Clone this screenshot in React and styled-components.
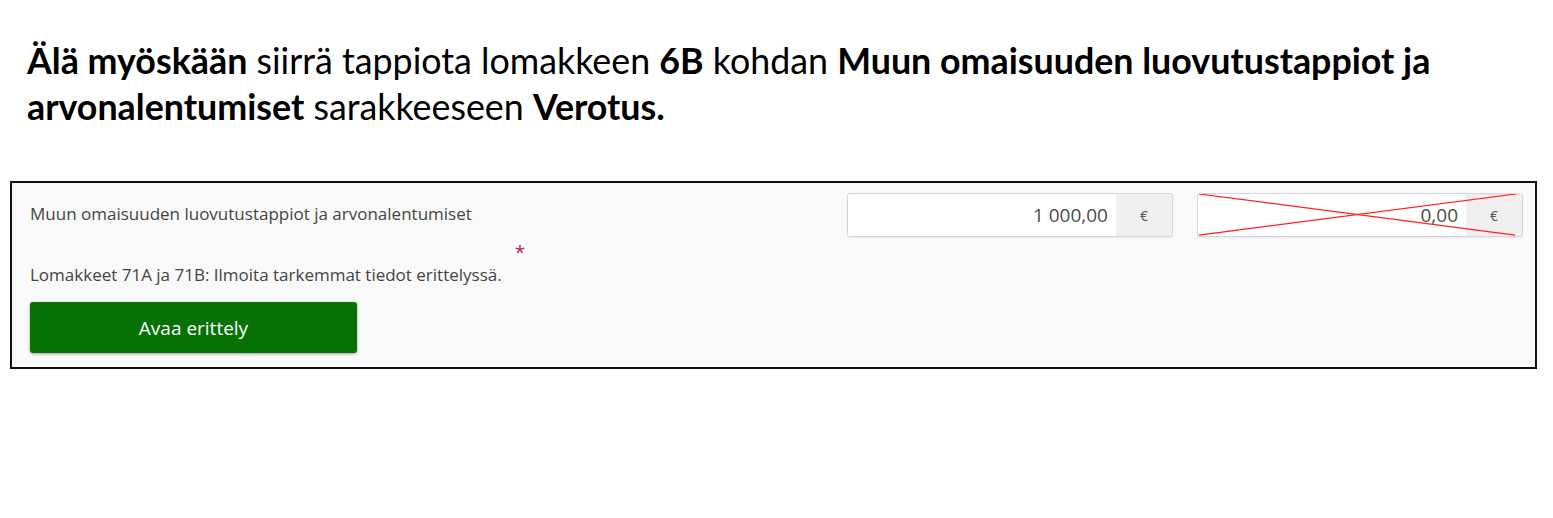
import React from "react";
import styled, { createGlobalStyle } from "styled-components";

const Global = createGlobalStyle`
  html, body { margin: 0; padding: 0; background: #ffffff; }
  body { width: 1553px; height: 518px; overflow: hidden; }
`;

const Page = styled.div`
  padding: 38px 0 0 10px;
  width: 1553px;
  box-sizing: border-box;
`;

const Heading = styled.p`
  margin: 0 0 51px 17px;
  max-width: 1480px;
  font-family: Lato, "Open Sans", sans-serif;
  font-size: 35.8px;
  line-height: 46px;
  color: #000;
  b { font-weight: 700; }
`;

const Panel = styled.section`
  width: 1527px;
  box-sizing: border-box;
  border: 2px solid #111;
  background: #f9f9f9;
  padding: 10px 12px 14px 18px;
  display: grid;
  grid-template-columns: 1fr auto;
  font-family: "Open Sans", "Noto Sans", sans-serif;
  color: #444;
`;

const LeftCol = styled.div`
  display: flex;
  flex-direction: column;
`;

const Label = styled.div`
  height: 44px;
  box-sizing: border-box;
  padding-bottom: 4px;
  display: flex;
  align-items: center;
  font-size: 17px;
`;

const HelpRow = styled.div`
  display: flex;
  align-items: flex-start;
  gap: 13px;
  margin-top: 6px;
`;

const Help = styled.div`
  font-size: 17px;
  padding-top: 22px;
  line-height: 20px;
`;

const Star = styled.span`
  color: #c2185b;
  font-size: 19px;
  line-height: 18px;
`;

const Button = styled.button`
  margin-top: 17px;
  width: 327px;
  height: 51px;
  border: none;
  border-radius: 3px;
  background: #067206;
  color: #fff;
  font-family: "Open Sans", "Noto Sans", sans-serif;
  font-size: 19px;
  box-shadow: 0 1px 3px rgba(0, 0, 0, 0.35);
  cursor: pointer;
`;

const Inputs = styled.div`
  display: flex;
  gap: 24px;
  align-items: flex-start;
`;

const Field = styled.div`
  position: relative;
  width: 326px;
  height: 44px;
  box-sizing: border-box;
  border: 1px solid #d6d6d6;
  border-radius: 3px;
  background: #fff;
  display: flex;
  overflow: hidden;
  box-shadow: 0 1px 2px rgba(0, 0, 0, 0.06);
`;

const Value = styled.div`
  flex: 1;
  display: flex;
  align-items: center;
  justify-content: flex-end;
  padding-right: 8px;
  font-size: 19px;
  color: #4a4a4a;
`;

const Addon = styled.div`
  width: 56px;
  background: #efefef;
  display: flex;
  align-items: center;
  justify-content: center;
  font-size: 14px;
  color: #555;
`;

const Cross = styled.svg`
  position: absolute;
  inset: 0;
  width: 100%;
  height: 100%;
  pointer-events: none;
`;

export default function App() {
  return (
    <>
      <Global />
      <Page>
        <Heading>
          <b>Älä myöskään</b> siirrä tappiota lomakkeen <b>6B</b> kohdan{" "}
          <b>Muun omaisuuden luovutustappiot ja arvonalentumiset</b> sarakkeeseen{" "}
          <b>Verotus.</b>
        </Heading>
        <Panel>
          <LeftCol>
            <Label>Muun omaisuuden luovutustappiot ja arvonalentumiset</Label>
            <HelpRow>
              <Help>Lomakkeet 71A ja 71B: Ilmoita tarkemmat tiedot erittelyssä.</Help>
              <Star>*</Star>
            </HelpRow>
            <div>
              <Button>Avaa erittely</Button>
            </div>
          </LeftCol>
          <Inputs>
            <Field>
              <Value>1 000,00</Value>
              <Addon>€</Addon>
            </Field>
            <Field>
              <Value>0,00</Value>
              <Addon>€</Addon>
              <Cross viewBox="0 0 326 44" preserveAspectRatio="none">
                <line x1="1" y1="0" x2="319" y2="43" stroke="#ff2020" strokeWidth="1.3" />
                <line x1="1" y1="43" x2="320" y2="0" stroke="#ff2020" strokeWidth="1.3" />
              </Cross>
            </Field>
          </Inputs>
        </Panel>
      </Page>
    </>
  );
}
